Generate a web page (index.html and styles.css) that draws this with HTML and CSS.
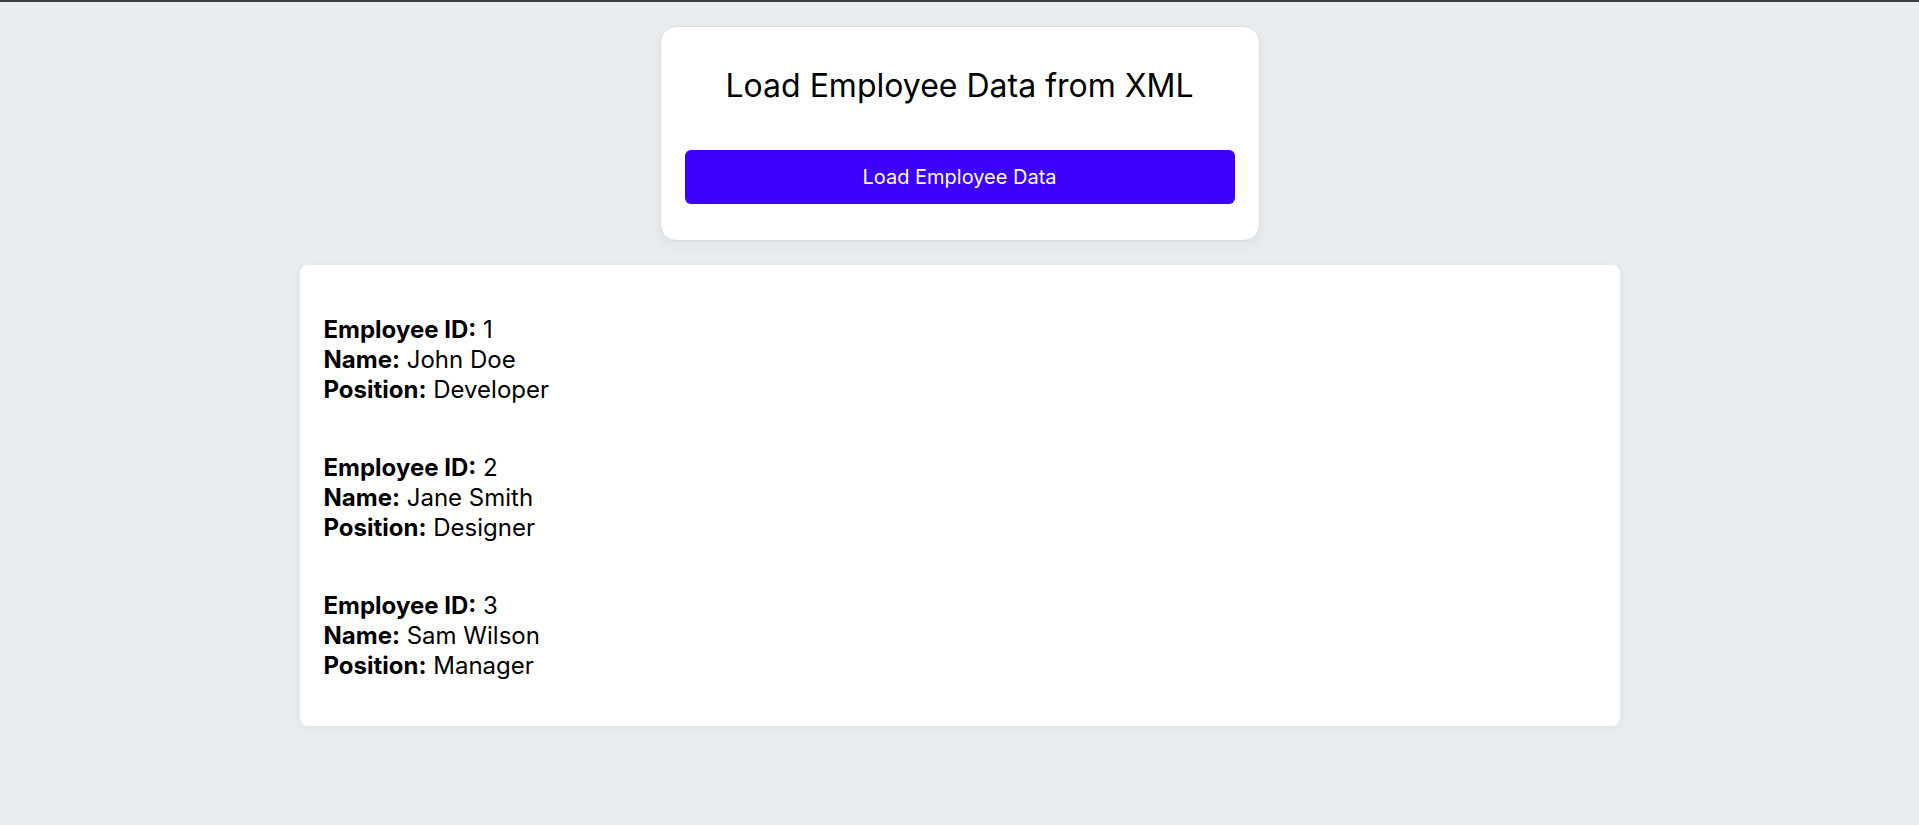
FILE: index.html
```html
<!DOCTYPE html>
<html lang="en">
<head>
<meta charset="utf-8">
<title>Load Employee Data from XML</title>
<link rel="stylesheet" href="styles.css">
</head>
<body>
<div class="topbar"></div>
<main class="page">
  <section class="loader-card">
    <h2 class="loader-title">Load Employee Data from XML</h2>
    <button class="load-button" type="button">Load Employee Data</button>
  </section>
  <section class="results-card">
    <div class="employee">
      <div class="row"><strong>Employee ID:</strong> 1</div>
      <div class="row"><strong>Name:</strong> John Doe</div>
      <div class="row"><strong>Position:</strong> Developer</div>
    </div>
    <div class="employee">
      <div class="row"><strong>Employee ID:</strong> 2</div>
      <div class="row"><strong>Name:</strong> Jane Smith</div>
      <div class="row"><strong>Position:</strong> Designer</div>
    </div>
    <div class="employee">
      <div class="row"><strong>Employee ID:</strong> 3</div>
      <div class="row"><strong>Name:</strong> Sam Wilson</div>
      <div class="row"><strong>Position:</strong> Manager</div>
    </div>
  </section>
</main>
</body>
</html>
```
FILE: styles.css
```css
* { box-sizing: border-box; }

html, body {
  margin: 0;
  padding: 0;
}

body {
  background: #e9edf0;
  font-family: "Inter", "Noto Sans", sans-serif;
  color: #000;
  min-height: 825px;
}

.topbar {
  height: 2px;
  background: #3c3e40;
}

.page {
  display: flex;
  flex-direction: column;
  align-items: center;
  padding-top: 24px;
}

.loader-card {
  width: 600px;
  background: #fff;
  border: 1px solid #d8dbdf;
  border-radius: 16px;
  padding: 24px 24px 36px;
  box-shadow: 0 4px 14px rgba(0, 0, 0, 0.05);
  display: flex;
  flex-direction: column;
}

.loader-title {
  margin: 15px 0 45px;
  font-size: 32px;
  font-weight: 400;
  line-height: 39px;
  text-align: center;
  color: #000;
}

.load-button {
  display: block;
  width: 100%;
  height: 54px;
  padding: 15px 0;
  border: none;
  border-radius: 6px;
  background: #3b00ff;
  color: #fff;
  font-family: "Inter", "Noto Sans", sans-serif;
  font-size: 20px;
  line-height: 24px;
  font-weight: 400;
  cursor: pointer;
}

.results-card {
  width: 1320px;
  margin-top: 24px;
  background: #fff;
  border-radius: 8px;
  padding: 50px 24px 45px;
  box-shadow: 0 2px 12px rgba(0, 0, 0, 0.05);
  display: flex;
  flex-direction: column;
  gap: 48px;
}

.employee {
  display: flex;
  flex-direction: column;
}

.row {
  font-size: 24px;
  line-height: 30px;
}

.row strong {
  font-weight: 700;
}
```
